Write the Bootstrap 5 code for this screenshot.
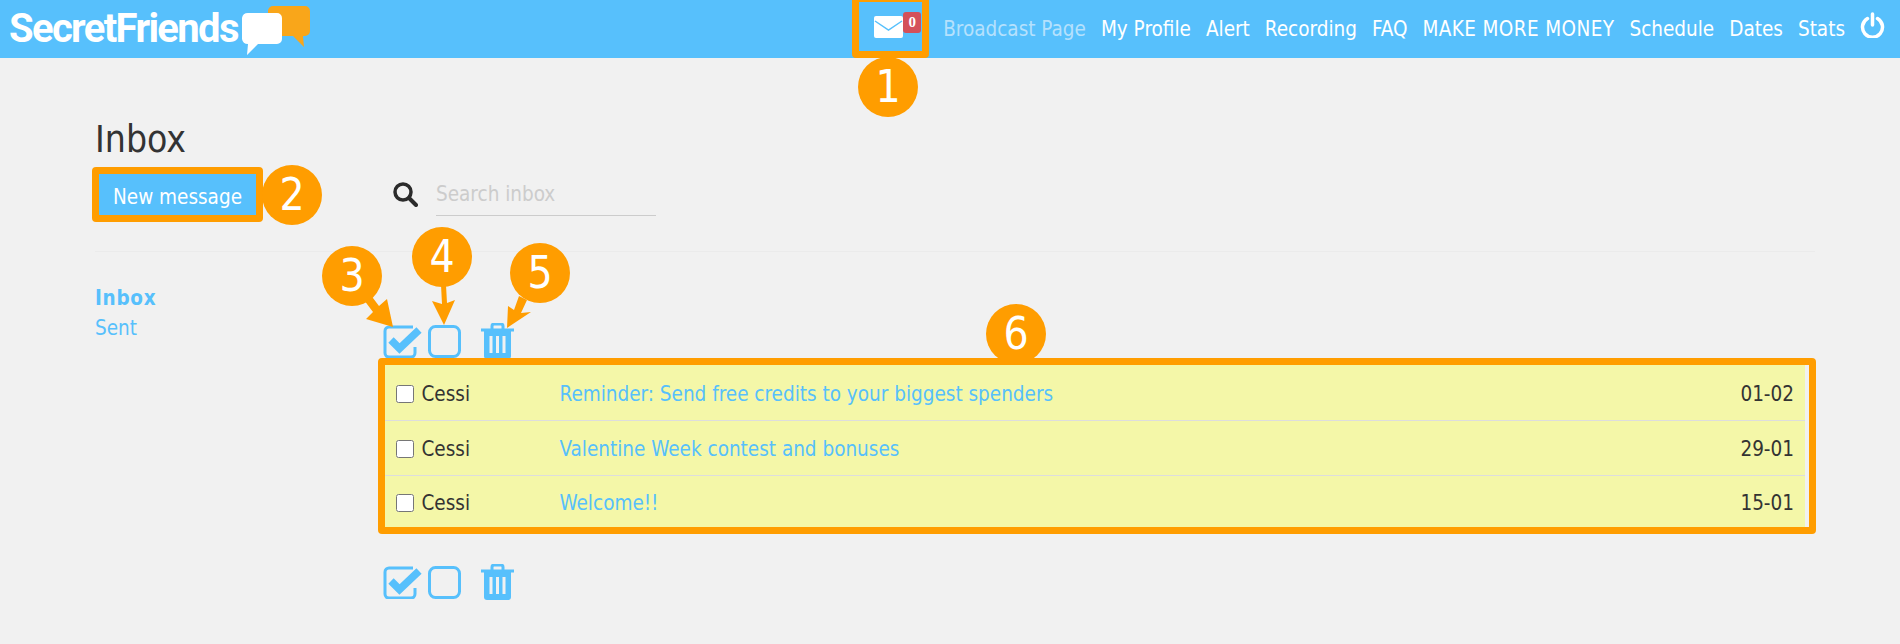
<!DOCTYPE html>
<html lang="en">
<head>
    <meta charset="UTF-8">
    <title>SecretFriends Inbox</title>
    <link href="https://cdn.jsdelivr.net/npm/bootstrap@5.3.3/dist/css/bootstrap.min.css" rel="stylesheet">
    <style>
        html, body { height: 100%; }
        body { background: #f1f1f1; color: #333; font-family: "DejaVu Sans Condensed", "DejaVu Sans", sans-serif; font-size: 20.5px; position: relative; overflow: hidden; }
        .topbar { height: 58px; background: #57c0fc; padding: 0 15px 0 9px; }
        .brand-name { font-family: Roboto, sans-serif; font-weight: 700; font-size: 40px; letter-spacing: -1.65px; color: #fff; line-height: 58px; }
        .brand-mark { width: 70px; height: 54px; margin-left: 2px; }
        .top-links { gap: 15px; }
        .top-links a { color: #fff; text-decoration: none; font-size: 20.5px; line-height: 1; }
        .top-links a.dim { color: #b5e1fc; }
        .top-links a.caps-link { letter-spacing: .4px; }
        .mail-link { width: 49px; height: 30px; position: relative; margin: 0 5px 4px 0; }
        .mail-count { position: absolute; left: 29px; top: 0; width: 18px; height: 21px; background: #d4505a; border-radius: 3px; color: #fff; font: 700 15px/20px "Liberation Serif", serif; text-align: center; }
        .page-body { padding: 0 95px; }
        .page-title { font-size: 37px; font-weight: 400; line-height: 40px; margin: 62px 0 0; color: #333; }
        .head-row { margin-top: 12px; padding-bottom: 34px; border-bottom: 1px solid #ebebeb; margin-right: -10px; }
        .new-btn { width: 161px; height: 45px; margin-left: 2px; background: #57c0fc; color: #fff; border: 0; border-radius: 0; font-size: 20.5px; line-height: 45px; padding: 3px 0 0; }
        .new-btn:hover { background: #57c0fc; color: #fff; }
        .search-area { margin-left: 135px; gap: 18px; }
        .search-input { width: 220px; height: 42px; padding: 0; border: 0; border-bottom: 1px solid #ccc; border-radius: 0; background: transparent; font-size: 20.5px; }
        .search-input::placeholder { color: #ccc; opacity: 1; }
        .search-input:focus { background: transparent; box-shadow: none; }
        .side-menu { width: 290px; padding-top: 31px; }
        .side-menu a { display: block; color: #57c0fc; text-decoration: none; font-size: 20.5px; line-height: 30px; }
        .side-menu a.active-item { font-weight: 700; letter-spacing: .7px; }
        .mail-area { width: 1423px; padding-top: 73px; }
        .tool-row { height: 33px; gap: 8px; margin-left: -1px; }
        .tool-row svg { display: block; }
        .tool-row svg.check-icon { margin-right: -3px; }
        .tool-row svg.trash-icon { margin: 0 0 1px 12px; }
        .mail-table { background: #f4f7a8; margin: 7px 0 38px; padding-top: 1px; }
        .mail-table > div { height: 55px; border-bottom: 1px solid #ddd; padding: 2px 11px 0 12px; }
        .mail-table > div:last-child { border-bottom: 0; height: 52px; }
        .mail-check { width: 18px; height: 18px; margin: 0 7px 0 0; border: 1.5px solid #767676; border-radius: 3px; background: #fff; flex: none; }
        .sender { width: 138px; color: #333; }
        .subject { color: #57c0fc; text-decoration: none; flex: 1; }
        .mail-date { color: #333; }
        .note-layer { position: absolute; inset: 0; pointer-events: none; }
        .note-box { position: absolute; border: 7px solid #ff9d00; border-radius: 4px; }
        .note-num { position: absolute; width: 60px; height: 60px; border-radius: 50%; background: #ff9d00; color: #fff; font-size: 44px; line-height: 60px; text-align: center; }
        .note-arrows { position: absolute; left: 0; top: 0; }
    </style>
</head>
<body>

<nav class="navbar topbar d-flex justify-content-between flex-nowrap">
    <a class="d-flex align-items-center text-decoration-none" href="#">
        <span class="brand-name">SecretFriends</span>
        <svg class="brand-mark" viewBox="0 0 70 54">
            <path d="M33 4h32a5 5 0 0 1 5 5v20a5 5 0 0 1-5 5h-2l1 11-11-11H33a5 5 0 0 1-5-5V9a5 5 0 0 1 5-5z" fill="#f9a61a"/>
            <path d="M8 11h29a5 5 0 0 1 5 5v21a5 5 0 0 1-5 5H18L7 53l1-11a6 6 0 0 1-6-5V16a6 6 0 0 1 6-5z" fill="#fff"/>
        </svg>
    </a>
    <div class="nav top-links align-items-center flex-nowrap">
        <a class="mail-link d-block" href="#">
            <svg width="29" height="22" viewBox="0 0 29 22" class="position-absolute top-50 start-0 translate-middle-y">
                <rect width="29" height="22" rx="2" fill="#fff"/>
                <path d="M1 5l13.500 9L28 5" fill="none" stroke="#57c0fc" stroke-width="1.500"/>
            </svg>
            <span class="mail-count">0</span>
        </a>
        <a class="dim" href="#">Broadcast Page</a>
        <a href="#">My Profile</a>
        <a href="#">Alert</a>
        <a href="#">Recording</a>
        <a href="#">FAQ</a>
        <a class="caps-link" href="#">MAKE MORE MONEY</a>
        <a href="#">Schedule</a>
        <a href="#">Dates</a>
        <a href="#">Stats</a>
        <a href="#" class="d-block mb-2">
            <svg width="25" height="26" viewBox="0 0 25 26" class="d-block">
                <path d="M7.500 6.500a10 10 0 1 0 10 0" fill="none" stroke="#fff" stroke-width="3.500" stroke-linecap="round"/>
                <path d="M12.500 2v11" stroke="#fff" stroke-width="3.500" stroke-linecap="round"/>
            </svg>
        </a>
    </div>
</nav>

<main class="page-body">
    <h1 class="page-title">Inbox</h1>
    <div class="head-row d-flex align-items-center">
        <button class="btn new-btn">New message</button>
        <div class="search-area d-flex align-items-center">
            <svg width="25" height="25" viewBox="0 0 25 25">
                <circle cx="10" cy="10" r="8" fill="none" stroke="#2b2b2b" stroke-width="3.500"/>
                <path d="M16 16l7 7" stroke="#2b2b2b" stroke-width="4" stroke-linecap="round"/>
            </svg>
            <input class="form-control search-input" placeholder="Search inbox">
        </div>
    </div>

    <div class="d-flex">
        <div class="side-menu">
            <a class="active-item" href="#">Inbox</a>
            <a href="#">Sent</a>
        </div>
        <div class="mail-area">
            <div class="tool-row d-flex align-items-center">
                <svg width="40" height="33" viewBox="0 0 40 33" class="check-icon">
                    <path d="M32 22v6a4 4 0 0 1-4 4H6a4 4 0 0 1-4-4V6a4 4 0 0 1 4-4h24" fill="none" stroke="#57c0fc" stroke-width="3"/>
                    <path d="M8 15l8.500 8.500L36 5" fill="none" stroke="#57c0fc" stroke-width="7.500"/>
                </svg>
                <svg width="33" height="33" viewBox="0 0 33 33">
                    <rect x="1.500" y="1.500" width="30" height="30" rx="6" fill="none" stroke="#57c0fc" stroke-width="3"/>
                </svg>
                <svg width="33" height="36" viewBox="0 0 33 36" class="trash-icon">
                    <path d="M0 7h33M11 6V3a2 2 0 0 1 2-2h7a2 2 0 0 1 2 2v3" fill="none" stroke="#57c0fc" stroke-width="3"/>
                    <path d="M3 8h27v25a3 3 0 0 1-3 3H6a3 3 0 0 1-3-3z" fill="#57c0fc"/>
                    <path d="M10 13v17M16.500 13v17M23 13v17" stroke="#f1f1f1" stroke-width="3"/>
                </svg>
            </div>
            <div class="mail-table">
                <div class="d-flex align-items-center">
                    <input type="checkbox" class="mail-check">
                    <span class="sender">Cessi</span>
                    <a class="subject" href="#">Reminder: Send free credits to your biggest spenders</a>
                    <span class="mail-date">01-02</span>
                </div>
                <div class="d-flex align-items-center">
                    <input type="checkbox" class="mail-check">
                    <span class="sender">Cessi</span>
                    <a class="subject" href="#">Valentine Week contest and bonuses</a>
                    <span class="mail-date">29-01</span>
                </div>
                <div class="d-flex align-items-center">
                    <input type="checkbox" class="mail-check">
                    <span class="sender">Cessi</span>
                    <a class="subject" href="#">Welcome!!</a>
                    <span class="mail-date">15-01</span>
                </div>
            </div>
            <div class="tool-row d-flex align-items-center">
                <svg width="40" height="33" viewBox="0 0 40 33" class="check-icon">
                    <path d="M32 22v6a4 4 0 0 1-4 4H6a4 4 0 0 1-4-4V6a4 4 0 0 1 4-4h24" fill="none" stroke="#57c0fc" stroke-width="3"/>
                    <path d="M8 15l8.500 8.500L36 5" fill="none" stroke="#57c0fc" stroke-width="7.500"/>
                </svg>
                <svg width="33" height="33" viewBox="0 0 33 33">
                    <rect x="1.500" y="1.500" width="30" height="30" rx="6" fill="none" stroke="#57c0fc" stroke-width="3"/>
                </svg>
                <svg width="33" height="36" viewBox="0 0 33 36" class="trash-icon">
                    <path d="M0 7h33M11 6V3a2 2 0 0 1 2-2h7a2 2 0 0 1 2 2v3" fill="none" stroke="#57c0fc" stroke-width="3"/>
                    <path d="M3 8h27v25a3 3 0 0 1-3 3H6a3 3 0 0 1-3-3z" fill="#57c0fc"/>
                    <path d="M10 13v17M16.500 13v17M23 13v17" stroke="#f1f1f1" stroke-width="3"/>
                </svg>
            </div>
        </div>
    </div>
</main>

<!-- orange annotations drawn over the page -->
<div class="note-layer">
    <svg class="note-arrows" width="1900" height="644" viewBox="0 0 1900 644">
        <g fill="#ff9d00">
            <path d="M393 327L387 299L379 306L370 294L364 300L373 312L366 319Z"/>
            <path d="M444 325L432 301L442 304L441 285L446 285L447 303L455 300Z"/>
            <path d="M507 328L508 306L514 310L519 296L527 300L521 313L531 312Z"/>
        </g>
    </svg>
    <div class="note-box" style="left:852px;top:-5px;width:77px;height:63px"></div>
    <div class="note-box" style="left:92px;top:167px;width:171px;height:55px"></div>
    <div class="note-box" style="left:378px;top:358px;width:1438px;height:176px"></div>
    <div class="note-num" style="left:858px;top:57px">1</div>
    <div class="note-num" style="left:262px;top:165px">2</div>
    <div class="note-num" style="left:322px;top:246px">3</div>
    <div class="note-num" style="left:412px;top:227px">4</div>
    <div class="note-num" style="left:510px;top:243px">5</div>
    <div class="note-num" style="left:986px;top:304px">6</div>
</div>

</body>
</html>
